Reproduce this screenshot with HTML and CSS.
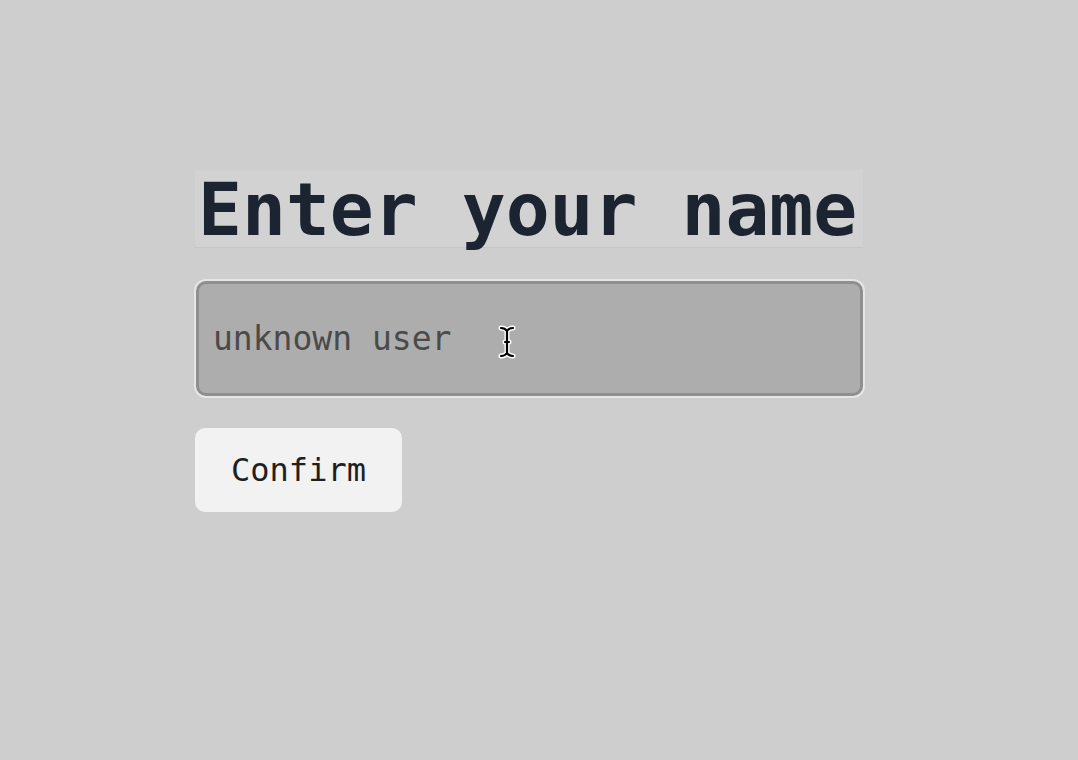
FILE: index.html
```html
<!DOCTYPE html>
<html lang="en">
<head>
<meta charset="utf-8">
<title>Enter your name</title>
<link rel="stylesheet" href="styles.css">
</head>
<body>
  <main class="form">
    <h1 class="title">Enter your name</h1>
    <div class="field">
      <input class="name-input" type="text" placeholder="unknown user">
      <svg class="cursor" width="18" height="34" viewBox="0 0 18 34" aria-hidden="true">
        <path d="M3 3 Q7 3 9 6 Q11 3 15 3 M9 6 V28 M3 31 Q7 31 9 28 Q11 31 15 31 M7 17 H11" fill="none" stroke="#fff" stroke-width="5" stroke-linecap="round"/>
        <path d="M3 3 Q7 3 9 6 Q11 3 15 3 M9 6 V28 M3 31 Q7 31 9 28 Q11 31 15 31 M7 17 H11" fill="none" stroke="#000" stroke-width="2.2" stroke-linecap="round"/>
      </svg>
    </div>
    <button class="confirm" type="button">Confirm</button>
  </main>
</body>
</html>
```

FILE: styles.css
```css
html, body {
  margin: 0;
  padding: 0;
  background: #cecece;
}

body {
  width: 1078px;
  height: 760px;
  overflow: hidden;
  font-family: "DejaVu Sans Mono", "Liberation Mono", monospace;
}

.form {
  display: flex;
  flex-direction: column;
  align-items: flex-start;
  padding: 170px 0 0 195px;
  width: 668px;
}

.title {
  margin: 0;
  width: 668px;
  height: 77px;
  box-sizing: border-box;
  padding: 2px 0 0 3px;
  font-size: 73px;
  line-height: 75px;
  font-weight: bold;
  color: #1c2431;
  background: #d2d2d2;
  box-shadow: 0 1px 1px rgba(0, 0, 0, 0.04);
  white-space: nowrap;
}

.field {
  position: relative;
  margin-top: 34px;
  width: 668px;
}

.name-input {
  display: block;
  box-sizing: border-box;
  width: 667px;
  height: 115px;
  margin: 0 0 0 1px;
  padding: 0 0 0 14px;
  border: 3px solid #8f8f8f;
  border-radius: 10px;
  background: #adadad;
  box-shadow: 0 0 0 2px #e6e6e6;
  font-family: "DejaVu Sans Mono", "Liberation Mono", monospace;
  font-size: 33px;
  color: #4a4a4a;
  outline: none;
}

.name-input::placeholder {
  color: #4a4a4a;
  opacity: 1;
}

.cursor {
  position: absolute;
  left: 303px;
  top: 44px;
}

.confirm {
  margin-top: 32px;
  box-sizing: border-box;
  width: 207px;
  height: 84px;
  padding: 0;
  border: none;
  border-radius: 10px;
  background: #f2f2f2;
  font-family: "DejaVu Sans Mono", "Liberation Mono", monospace;
  font-size: 32px;
  color: #1f1f1f;
  cursor: pointer;
}
```
